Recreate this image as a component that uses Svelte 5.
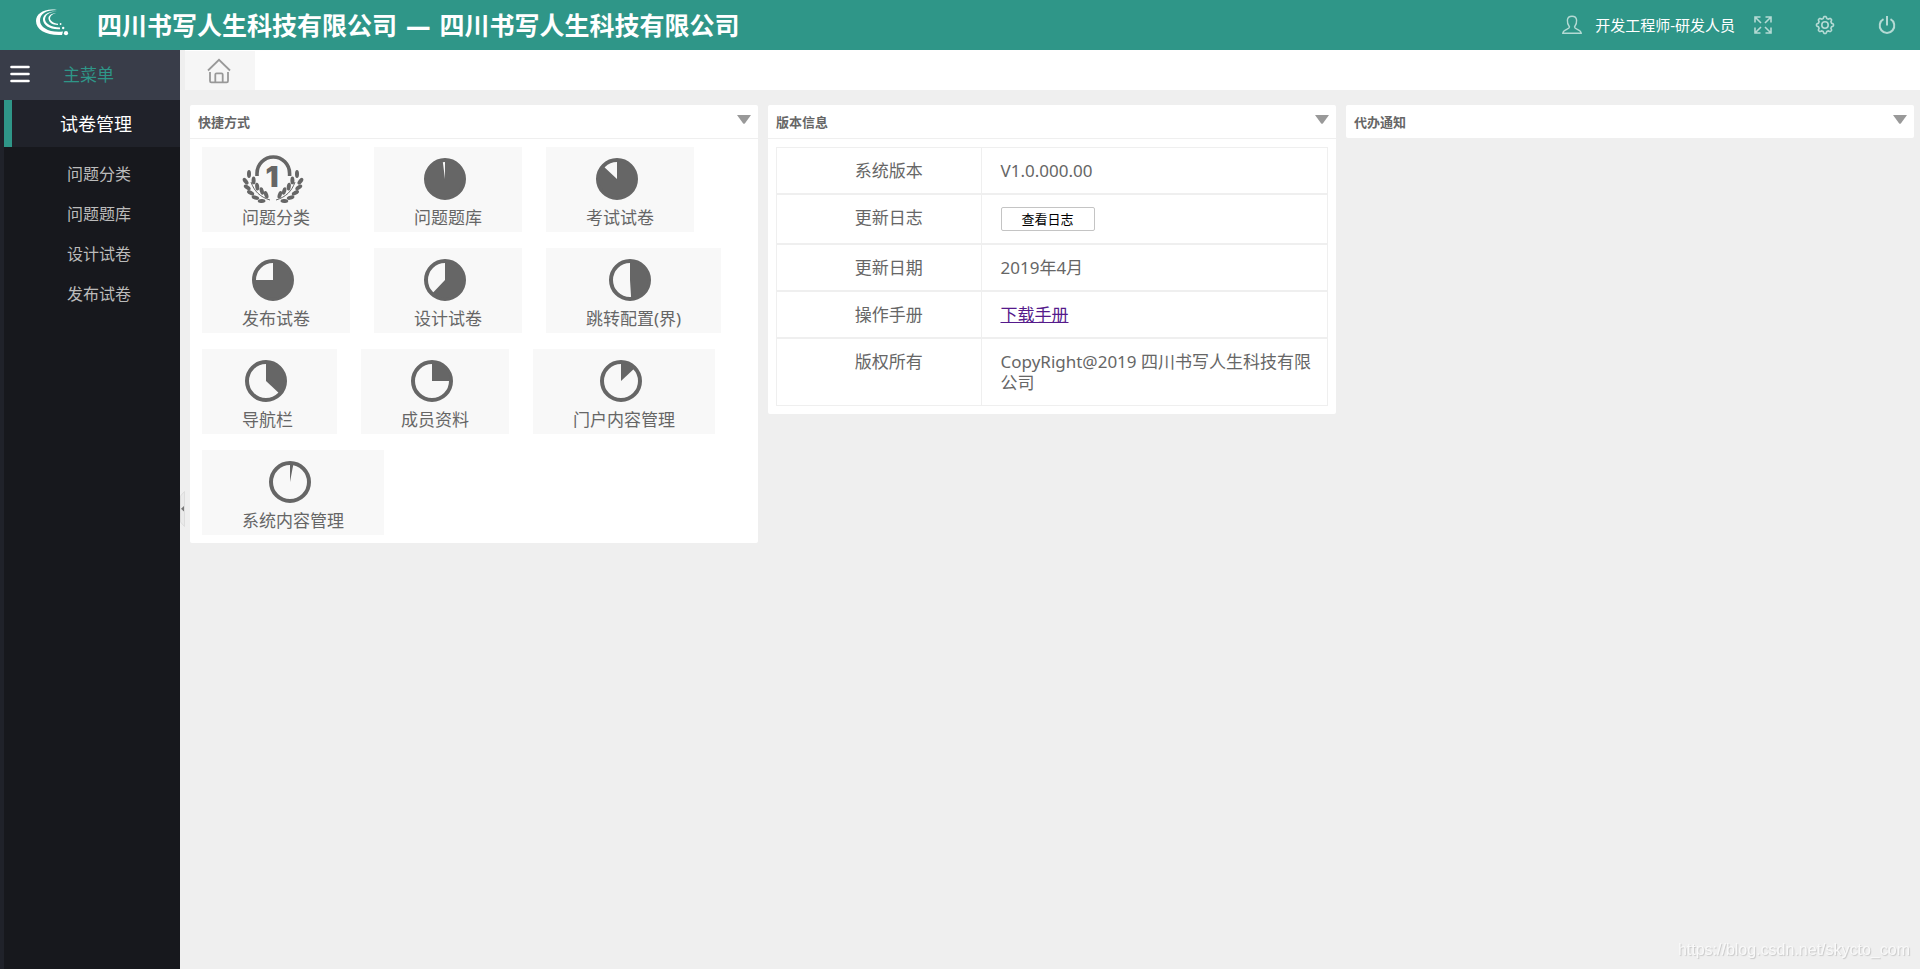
<script lang="ts">
	interface Shortcut {
		label: string;
		// filled share of the dial, left out for the laurel icon
		fill?: number;
	}

	const company = '四川书写人生科技有限公司';

	const menu = ['问题分类', '问题题库', '设计试卷', '发布试卷'];

	const shortcuts: Shortcut[] = [
		{ label: '问题分类' },
		{ label: '问题题库', fill: 0.98 },
		{ label: '考试试卷', fill: 0.87 },
		{ label: '发布试卷', fill: 0.75 },
		{ label: '设计试卷', fill: 0.62 },
		{ label: '跳转配置(界)', fill: 0.49 },
		{ label: '导航栏', fill: 0.37 },
		{ label: '成员资料', fill: 0.25 },
		{ label: '门户内容管理', fill: 0.13 },
		{ label: '系统内容管理', fill: 0.03 }
	];

	// x, y, rotation of the leaves on the left branch
	const leaves = [
		[6, 19, 0],
		[2.6, 26.2, -38],
		[4.2, 32.4, -55],
		[7.6, 37.8, -62],
		[12.4, 42.6, -75],
		[18.6, 46, 85],
		[10.6, 25.4, 0],
		[14.2, 31.6, -8],
		[18.8, 36, -15],
		[23.2, 39.8, -18]
	];

	function wedge(fill: number): string {
		const angle = fill * Math.PI * 2;
		const x = 24 + 18 * Math.sin(angle);
		const y = 24 - 18 * Math.cos(angle);
		return `M24 24V6A18 18 0 ${fill > 0.5 ? 1 : 0} 1 ${x.toFixed(2)} ${y.toFixed(2)}Z`;
	}

	function gear(): string {
		const points: string[] = [];
		for (let i = 0; i < 72; i++) {
			const a = (i / 72) * Math.PI * 2;
			const r = 7.6 + 0.9 * Math.tanh(2.5 * Math.cos(a * 8));
			points.push(`${(10 + r * Math.sin(a)).toFixed(2)} ${(10 - r * Math.cos(a)).toFixed(2)}`);
		}
		return `M${points.join('L')}Z`;
	}
</script>

{#snippet branch()}
	<path d="M8 27C11 36 17 42 27 45" fill="none" stroke="currentColor" stroke-width="1" />
	{#each leaves as [x, y, turn]}
		<ellipse cx={x} cy={y} rx="2" ry="3.9" transform="rotate({turn} {x} {y})" />
	{/each}
{/snippet}

{#snippet panelHead(title: string)}
	<header class="panel-head">
		<h2>{title}</h2>
		<button class="fold" aria-label="收起{title}">
			<svg width="14" height="9" viewBox="0 0 14 9"><path d="M0 0H14L8 8.3Q7 9.4 6 8.3Z" fill="#999" /></svg>
		</button>
	</header>
{/snippet}

<div class="app">
	<header class="topbar">
		<svg class="logo" width="34" height="28" viewBox="0 0 34 28">
			<g fill="#fff">
				<path d="M22 1C9-1 1 5 1 12C1 21 12 27 27 26L28 22.5C15 24 5 19 5 11.5C5 5 11 1 22 1Z" />
				<path d="M22 2.5C13 2 7.5 6 8 11C8.5 16 15 21 25 20.2L25 18.4C16 18 10.5 15 10 10.5C10 6 14 3 22 2.5Z" />
				<path d="M21 4C16 4.5 13 7 13.5 10C14 13 17 16 23 16L23 14.7C18 14 15.5 12 15 9.5C15 7 17 5 21 4Z" />
				<circle cx="31" cy="24.2" r="2.1" />
				<circle cx="28.2" cy="19" r="1.2" />
				<circle cx="25.6" cy="15" r="0.9" />
			</g>
		</svg>
		<h1>{company} — {company}</h1>
		<button class="user">
			<svg width="20" height="20" viewBox="0 0 20 20" fill="none" stroke="currentColor" stroke-width="1.4">
				<path d="M7.5 12C5.5 9.5 5.2 7 5.4 5C5.7 2.5 7.5 1.2 10 1.2S14.3 2.5 14.6 5C14.8 7 14.5 9.5 12.5 12C12.5 14.5 19 14.5 19.2 18.3H.8C1 14.5 7.5 14.5 7.5 12Z" />
			</svg>
			<span>开发工程师-研发人员</span>
		</button>
		<button aria-label="全屏">
			<svg width="20" height="20" viewBox="0 0 20 20" fill="none" stroke="currentColor" stroke-width="1.6">
				<path d="M2 7.5V2H7.5M2 2L8 8M12.5 2H18V7.5M18 2L12 8M2 12.5V18H7.5M2 18L8 12M18 12.5V18H12.5M18 18L12 12" />
			</svg>
		</button>
		<button aria-label="设置">
			<svg width="20" height="20" viewBox="0 0 20 20" fill="none" stroke="currentColor" stroke-width="1.6">
				<path d={gear()} />
				<circle cx="10" cy="10" r="3.2" />
			</svg>
		</button>
		<button aria-label="退出">
			<svg width="20" height="20" viewBox="0 0 20 20" fill="none" stroke="currentColor" stroke-width="2">
				<path d="M6.5 4.2A7.3 7.3 0 1 0 13.5 4.2M10 1V10.5" />
			</svg>
		</button>
	</header>

	<div class="body">
		<nav class="sidebar">
			<div class="menu-head">
				<button aria-label="折叠菜单">
					<svg width="20" height="18" viewBox="0 0 20 18" stroke="#fff" stroke-width="2.6" stroke-linecap="round">
						<path d="M1.5 2H18.5M1.5 9H18.5M1.5 16H18.5" />
					</svg>
				</button>
				<span>主菜单</span>
			</div>
			<div class="menu">
				<a class="group" href="#papers">试卷管理</a>
				<ul>
					{#each menu as item}
						<li><a href="#{item}">{item}</a></li>
					{/each}
				</ul>
			</div>
			<button class="handle" aria-label="收起侧栏">
				<svg width="5" height="36" viewBox="0 0 5 36">
					<path d="M.5 5L4.5 .5V35.5L.5 31Z" fill="#eaeaea" stroke="#ddd" />
					<path d="M4 15V20.5L1 17.7Z" fill="#777" />
				</svg>
			</button>
		</nav>

		<main>
			<div class="tabs">
				<a class="tab" href="#home" aria-label="首页">
					<svg width="24" height="26" viewBox="0 0 24 26" fill="none" stroke="#999" stroke-width="1.8">
						<path d="M1 12.5L12 1.8L23 12.5M3 14V23Q3 24.3 4.3 24.3H19.7Q21 24.3 21 23V14M8.3 24V16.5Q8.3 15.3 9.5 15.3H14.5Q15.7 15.3 15.7 16.5V24" />
					</svg>
				</a>
			</div>

			<div class="panels">
				<section class="panel">
					{@render panelHead('快捷方式')}
					<div class="shortcuts">
						{#each shortcuts as s}
							<a class="shortcut" href="#{s.label}">
								{#if s.fill}
									<svg width="48" height="48" viewBox="0 0 48 48">
										<circle cx="24" cy="24" r="19" fill="none" stroke="currentColor" stroke-width="4" />
										<path d={wedge(s.fill)} fill="currentColor" />
									</svg>
								{:else}
									<svg class="laurel" width="48" height="48" viewBox="6 0 48 48" fill="currentColor">
										<path d="M14 21V18.5A16.3 16.5 0 0 1 46.6 18.5V21" fill="none" stroke="currentColor" stroke-width="3.6" />
										{@render branch()}
										<g transform="translate(60 0) scale(-1 1)">{@render branch()}</g>
										<text x="29" y="32" text-anchor="middle">1</text>
									</svg>
								{/if}
								<span>{s.label}</span>
							</a>
						{/each}
					</div>
				</section>

				<section class="panel">
					{@render panelHead('版本信息')}
					<div class="info">
						<table>
							<tbody>
								<tr>
									<th scope="row">系统版本</th>
									<td>V1.0.000.00</td>
								</tr>
								<tr>
									<th scope="row">更新日志</th>
									<td><button class="log">查看日志</button></td>
								</tr>
								<tr>
									<th scope="row">更新日期</th>
									<td>2019年4月</td>
								</tr>
								<tr>
									<th scope="row">操作手册</th>
									<td><a href="#manual">下载手册</a></td>
								</tr>
								<tr>
									<th scope="row">版权所有</th>
									<td>CopyRight@2019 {company}</td>
								</tr>
							</tbody>
						</table>
					</div>
				</section>

				<section class="panel">
					{@render panelHead('代办通知')}
				</section>
			</div>
		</main>
	</div>

	<div class="watermark">https://blog.csdn.net/skycto_com</div>
</div>

<style>
	:global(body) {
		background: #efefef;
	}

	.app {
		display: flex;
		flex-direction: column;
		min-height: 100vh;
		font-family: 'Noto Sans', 'Noto Sans CJK SC', sans-serif;
		font-size: 17px;
		line-height: 21px;
		color: #666;
	}

	button {
		padding: 0;
		border: 0;
		background: none;
		font-family: inherit;
		cursor: pointer;
	}

	svg {
		display: block;
		flex: none;
	}

	a {
		color: inherit;
		text-decoration: none;
	}

	.topbar {
		display: flex;
		align-items: center;
		box-sizing: border-box;
		height: 50px;
		padding: 0 23px 1px 35px;
		background: #2f9688;
		color: #b4dad4;
	}

	.topbar .logo {
		margin-bottom: 4px;
	}

	.topbar h1 {
		flex: 1;
		margin: 0 0 0 28px;
		padding-top: 4px;
		font-family: 'DejaVu Sans', 'Noto Sans CJK SC', sans-serif;
		font-size: 25px;
		line-height: 44px;
		font-weight: 700;
		color: #fff;
		white-space: nowrap;
	}

	.topbar button {
		margin-left: 42px;
		color: inherit;
	}

	.topbar .user {
		display: flex;
		align-items: center;
		gap: 13px;
		margin-right: -24px;
		font-size: 15px;
	}

	.user span {
		color: #fff;
	}

	.body {
		display: flex;
		flex: 1;
	}

	.sidebar {
		position: relative;
		display: flex;
		flex-direction: column;
		flex: none;
		width: 180px;
		background: #17181d;
	}

	.menu-head {
		display: flex;
		align-items: center;
		gap: 33px;
		box-sizing: border-box;
		height: 50px;
		padding: 0 0 2px 10px;
		background: #393d49;
		color: #2f9688;
	}

	.menu {
		flex: 1;
		border-left: 4px solid #20222a;
	}

	.group {
		display: block;
		padding: 1px 0 0 48px;
		border-left: 8px solid #2f9688;
		background: #20222a;
		font-size: 18px;
		line-height: 46px;
		color: #fff;
	}

	.menu ul {
		margin: 0;
		padding: 7px 0 0 63px;
		list-style: none;
		font-size: 16px;
		line-height: 40px;
		color: #bbb;
	}

	/* sits over the gutter between the menu and the page */
	.handle {
		position: absolute;
		left: 100%;
		top: 48%;
	}

	main {
		flex: 1;
		min-width: 0;
	}

	.tabs {
		display: flex;
		height: 39px;
		margin-left: 5px;
		border-top: 1px solid #fff;
		background: #fff;
	}

	.tab {
		display: flex;
		align-items: center;
		justify-content: center;
		box-sizing: border-box;
		width: 70px;
		padding-right: 2px;
		background: #f6f6f6;
	}

	.panels {
		display: grid;
		grid-template-columns: repeat(3, 1fr);
		align-items: start;
		gap: 10px;
		padding: 15px 6px 0 10px;
	}

	.panel {
		border-radius: 2px;
		background: #fff;
	}

	.panel-head {
		display: flex;
		align-items: flex-start;
		justify-content: space-between;
		height: 33px;
		padding: 0 7px 0 8px;
	}

	.panel-head h2 {
		margin: 0;
		font-size: 13px;
		line-height: 34px;
		font-weight: 700;
	}

	.fold {
		padding-top: 10px;
	}

	.shortcuts {
		display: flex;
		flex-wrap: wrap;
		gap: 16px 24px;
		padding: 8px 12px;
		border-top: 1px solid #efefef;
	}

	.shortcut {
		display: flex;
		flex-direction: column;
		gap: 4px;
		padding: 8px 40px 3px;
		background: #f8f8f8;
		line-height: 22px;
	}

	.shortcut svg {
		align-self: center;
		margin-right: 7px;
	}

	.laurel {
		overflow: visible;
	}

	.laurel text {
		font-family: Inter, 'Liberation Sans', sans-serif;
		font-size: 29px;
		font-weight: 900;
	}

	.info {
		padding: 8px;
		border-top: 1px solid #efefef;
	}

	table {
		width: 100%;
		border: 1px solid #efefef;
		border-width: 0 1px;
		border-spacing: 0;
		table-layout: fixed;
	}

	th,
	td {
		border: 1px solid #efefef;
		border-width: 1px 0;
		vertical-align: top;
	}

	th {
		width: 37%;
		padding: 12px 0 12px 20px;
		box-sizing: border-box;
		font-weight: 400;
		text-align: center;
	}

	td {
		padding: 12px 12px 12px 19px;
		border-left-width: 1px;
	}

	td a {
		color: #551a8b;
		text-decoration: underline;
	}

	.log {
		display: block;
		height: 24px;
		padding: 0 20px;
		border: 1px solid #c4c4c4;
		border-radius: 2px;
		background: #fff;
		font-size: 13px;
		line-height: 20px;
		color: #000;
	}

	.watermark {
		position: fixed;
		right: 10px;
		bottom: 9px;
		font-family: 'Liberation Sans', sans-serif;
		font-size: 16px;
		color: #f9f9f9;
		text-shadow: 1px 1px 1px #c8c8c8;
	}
</style>
